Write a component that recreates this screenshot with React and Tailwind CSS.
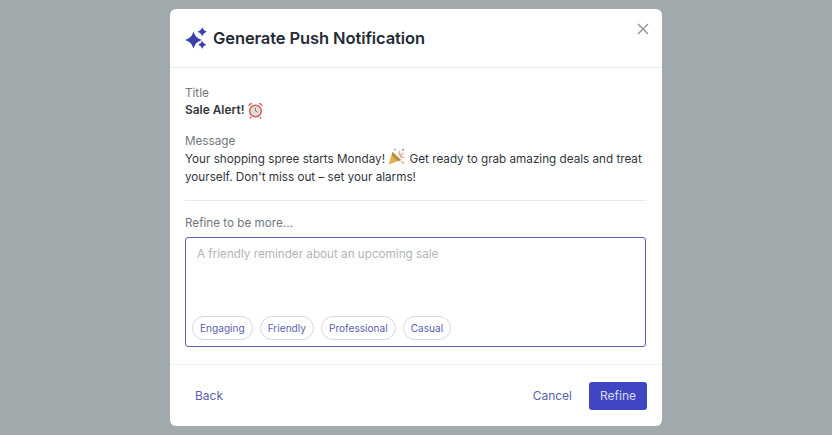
import React from "react";

const star = (cx, cy, r) => {
  const k = r * 0.22;
  return `M${cx} ${cy - r} Q${cx + k} ${cy - k} ${cx + r} ${cy} Q${cx + k} ${cy + k} ${cx} ${cy + r} Q${cx - k} ${cy + k} ${cx - r} ${cy} Q${cx - k} ${cy - k} ${cx} ${cy - r} Z`;
};

const Sparkles = () => (
  <svg width="22" height="22" viewBox="0 0 22 22" fill="#3b41a6" className="shrink-0">
    <path d={star(8.5, 13, 8.5)} />
    <path d={star(17.2, 4.8, 4.8)} />
    <path d={star(17.2, 17.8, 4)} />
  </svg>
);

const Clock = () => (
  <svg width="17" height="17" viewBox="0 0 16 17" className="shrink-0">
    <path d="M1 4.4 A2.6 2.6 0 0 1 5 1.6 Z" fill="#d9675f" />
    <path d="M15 4.4 A2.6 2.6 0 0 0 11 1.6 Z" fill="#d9675f" />
    <circle cx="8" cy="9" r="6.6" fill="#d9675f" />
    <circle cx="8" cy="9" r="5" fill="#dfdedb" />
    <path d="M8 5.8 V9 L10.2 10.2" stroke="#777" strokeWidth="0.9" fill="none" />
    <path d="M3.5 15 L2.5 16.4 M12.5 15 L13.5 16.4" stroke="#b9463f" strokeWidth="1.4" />
  </svg>
);

const Popper = () => (
  <svg width="18" height="17" viewBox="0 0 18 17" className="block">
    <path d="M4.5 4 L13 12 L0.5 16.5 Z" fill="#e0b050" />
    <path d="M4.5 4 L13 12 L10 13.2 L3.6 6.8 Z" fill="#b98a3e" />
    <path d="M8 2 L10 5.5 L12 1.5 L12.5 6 L17 4 L13.5 8 L17.5 9.5 L13 10.5 Z" fill="#e5b7a0" />
    <circle cx="15" cy="1.8" r="1" fill="#6f93c9" />
    <circle cx="6.8" cy="1.4" r="0.9" fill="#d98a7e" />
    <path d="M13.5 13.5 L16 15.5" stroke="#d9a05a" strokeWidth="1.3" />
  </svg>
);

const Chip = ({ children }) => (
  <span className="h-[24px] rounded-full border border-[#d5d7e3] bg-white px-[7px] text-[10.1px] leading-[22px] text-[#5a5fb0]">
    {children}
  </span>
);

export default function App() {
  return (
    <div className="h-[435px] w-[832px] overflow-hidden bg-[#a0a9ab] pt-[9px] font-['Inter',sans-serif]">
      <div className="relative ml-[170px] flex h-[417px] w-[492px] flex-col rounded-[6px] bg-white">
        <header className="flex h-[59px] items-center gap-[6px] border-b border-[#ebedef] pl-[15px]">
          <Sparkles />
          <h1 className="text-[16.5px] font-semibold tracking-[-0.1px] text-[#252b37]">Generate Push Notification</h1>
        </header>
        <button className="absolute right-[13px] top-[14px] text-[#8d9196]" aria-label="Close">
          <svg width="12" height="12" viewBox="0 0 12 12" stroke="currentColor" strokeWidth="1.4" fill="none" className="block">
            <path d="M1 1 L11 11 M11 1 L1 11" />
          </svg>
        </button>

        <main className="flex flex-1 flex-col pl-[15px] pr-[16px] pt-[16px] text-[11.7px] leading-[18px]">
          <div className="text-[#74787e]">Title</div>
          <div className="flex h-[16px] items-center gap-[3px] text-[11.9px] font-semibold text-[#32363d]">
            Sale Alert! <Clock />
          </div>
          <div className="mt-[14px] text-[#74787e]">Message</div>
          <p className="text-[#32363d]">
            Your shopping spree starts Monday! <span className="inline-block h-[12px] overflow-visible align-[-1px] leading-none"><span className="-mt-[4px] block"><Popper /></span></span> Get ready to grab amazing deals and treat
            <br />
            yourself. Don't miss out – set your alarms!
          </p>
          <div className="mt-[14px] border-b border-[#e8e9eb]" />
          <div className="mt-[13px] text-[#74787e]">Refine to be more...</div>
          <div className="mt-[5px] flex h-[110px] flex-col justify-between rounded-[3px] border border-[#5b5fa6] pb-[6px] pl-[6px] pt-[7px]">
            <div className="pl-[5px] text-[#b2b5b9]">A friendly reminder about an upcoming sale</div>
            <div className="flex gap-[7px]">
              <Chip>Engaging</Chip>
              <Chip>Friendly</Chip>
              <Chip>Professional</Chip>
              <Chip>Casual</Chip>
            </div>
          </div>
        </main>

        <footer className="flex h-[62px] items-center justify-between border-t border-[#eff0f2] pl-[25px] pr-[15px] text-[12px]">
          <button className="text-[#5a5fb0]">Back</button>
          <div className="flex items-center gap-[17px]">
            <button className="text-[#5a5fb0]">Cancel</button>
            <button className="h-[28px] w-[58px] rounded-[3px] bg-[#4045c4] text-[#d9dbf3]">Refine</button>
          </div>
        </footer>
      </div>
    </div>
  );
}
